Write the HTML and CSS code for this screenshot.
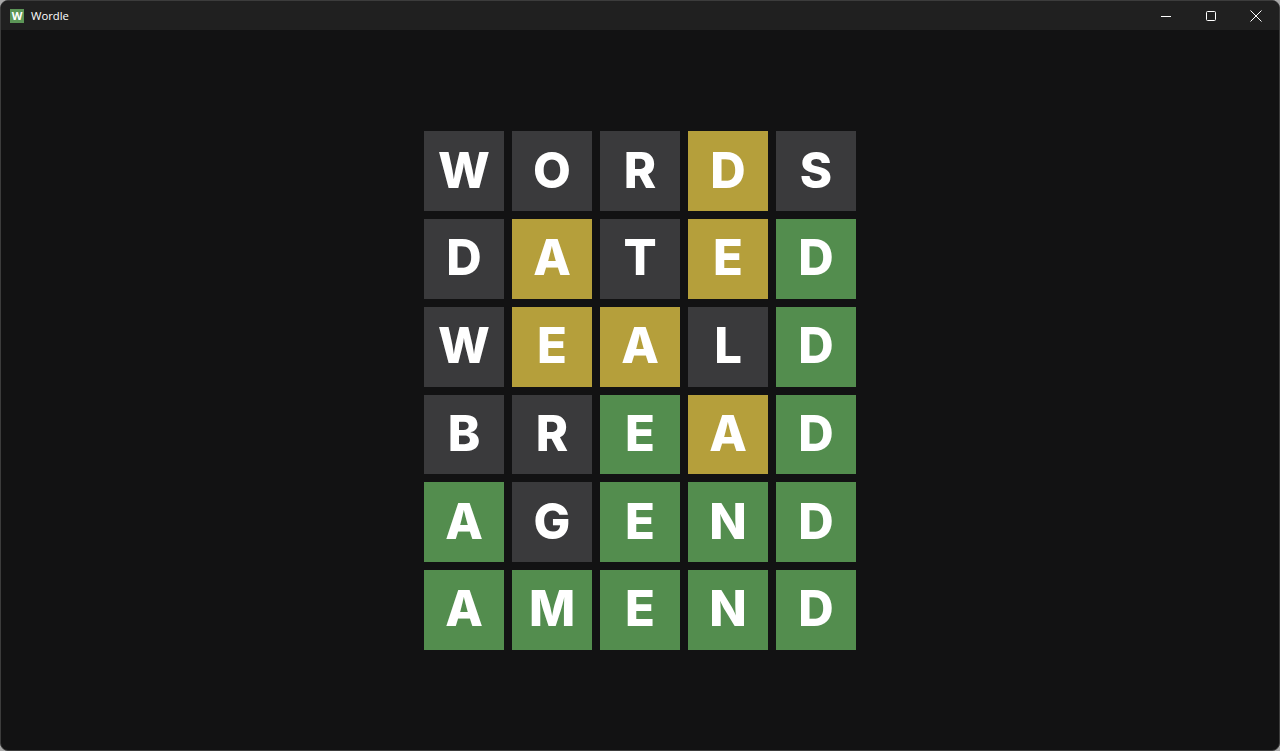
FILE: index.html
```html
<!DOCTYPE html>
<html lang="en">
<head>
<meta charset="utf-8">
<title>Wordle</title>
<link rel="stylesheet" href="styles.css">
</head>
<body>
<div class="window">
  <header class="titlebar">
    <div class="app-icon">W</div>
    <div class="app-title">Wordle</div>
    <div class="controls">
      <div class="control"><svg width="12" height="12" viewBox="0 0 12 12"><path d="M1 6.5h10" stroke="#fff" stroke-width="1" fill="none"/></svg></div>
      <div class="control"><svg width="12" height="12" viewBox="0 0 12 12"><rect x="1.5" y="1.5" width="9" height="9" rx="1" stroke="#fff" stroke-width="1" fill="none"/></svg></div>
      <div class="control close"><svg width="12" height="12" viewBox="0 0 12 12"><path d="M.5.5l11 11M11.5.5l-11 11" stroke="#fff" stroke-width="1" fill="none"/></svg></div>
    </div>
  </header>
  <main class="content">
    <div class="board">
      <div class="tile absent">W</div><div class="tile absent">O</div><div class="tile absent">R</div><div class="tile present">D</div><div class="tile absent">S</div>
      <div class="tile absent">D</div><div class="tile present">A</div><div class="tile absent">T</div><div class="tile present">E</div><div class="tile correct">D</div>
      <div class="tile absent">W</div><div class="tile present">E</div><div class="tile present">A</div><div class="tile absent">L</div><div class="tile correct">D</div>
      <div class="tile absent">B</div><div class="tile absent">R</div><div class="tile correct">E</div><div class="tile present">A</div><div class="tile correct">D</div>
      <div class="tile correct">A</div><div class="tile absent">G</div><div class="tile correct">E</div><div class="tile correct">N</div><div class="tile correct">D</div>
      <div class="tile correct">A</div><div class="tile correct">M</div><div class="tile correct">E</div><div class="tile correct">N</div><div class="tile correct">D</div>
    </div>
  </main>
</div>
</body>
</html>
```
FILE: styles.css
```css
* { box-sizing: border-box; }
html, body { margin: 0; height: 100%; }
body { background: #a9a9a9; overflow: hidden; font-family: "Open Sans", "Liberation Sans", sans-serif; }
.window {
  width: 1280px;
  height: 751px;
  display: flex;
  flex-direction: column;
  background: #121213;
  border: 1px solid #3c3c3c;
  border-radius: 8px;
  overflow: hidden;
}
.titlebar {
  height: 29px;
  flex: none;
  display: flex;
  align-items: center;
  background: #202020;
  padding-left: 9px;
  color: #fff;
}
.app-icon {
  width: 14px;
  height: 14px;
  background: #5c9657;
  color: #fff;
  font-size: 11px;
  font-weight: 700;
  line-height: 14px;
  text-align: center;
}
.app-title { margin-left: 7px; font-size: 11.3px; }
.controls { margin-left: auto; display: flex; }
.control {
  width: 45px;
  height: 29px;
  display: flex;
  align-items: center;
  justify-content: center;
}
.control.close { width: 46px; }
.content {
  flex: 1;
  display: flex;
  align-items: center;
  justify-content: center;
  padding-top: 1px;
}
.board {
  display: grid;
  grid-template-columns: repeat(5, 80px);
  grid-auto-rows: 79.8px;
  gap: 8px;
}
.tile {
  display: flex;
  align-items: center;
  justify-content: center;
  color: #fff;
  font-family: Inter, "Open Sans", sans-serif;
  font-size: 49px;
  font-weight: 800;
  line-height: 1;
  padding-bottom: 2px;
}
.absent { background: #3a3a3c; }
.present { background: #b59f3b; }
.correct { background: #538d4e; }
```
